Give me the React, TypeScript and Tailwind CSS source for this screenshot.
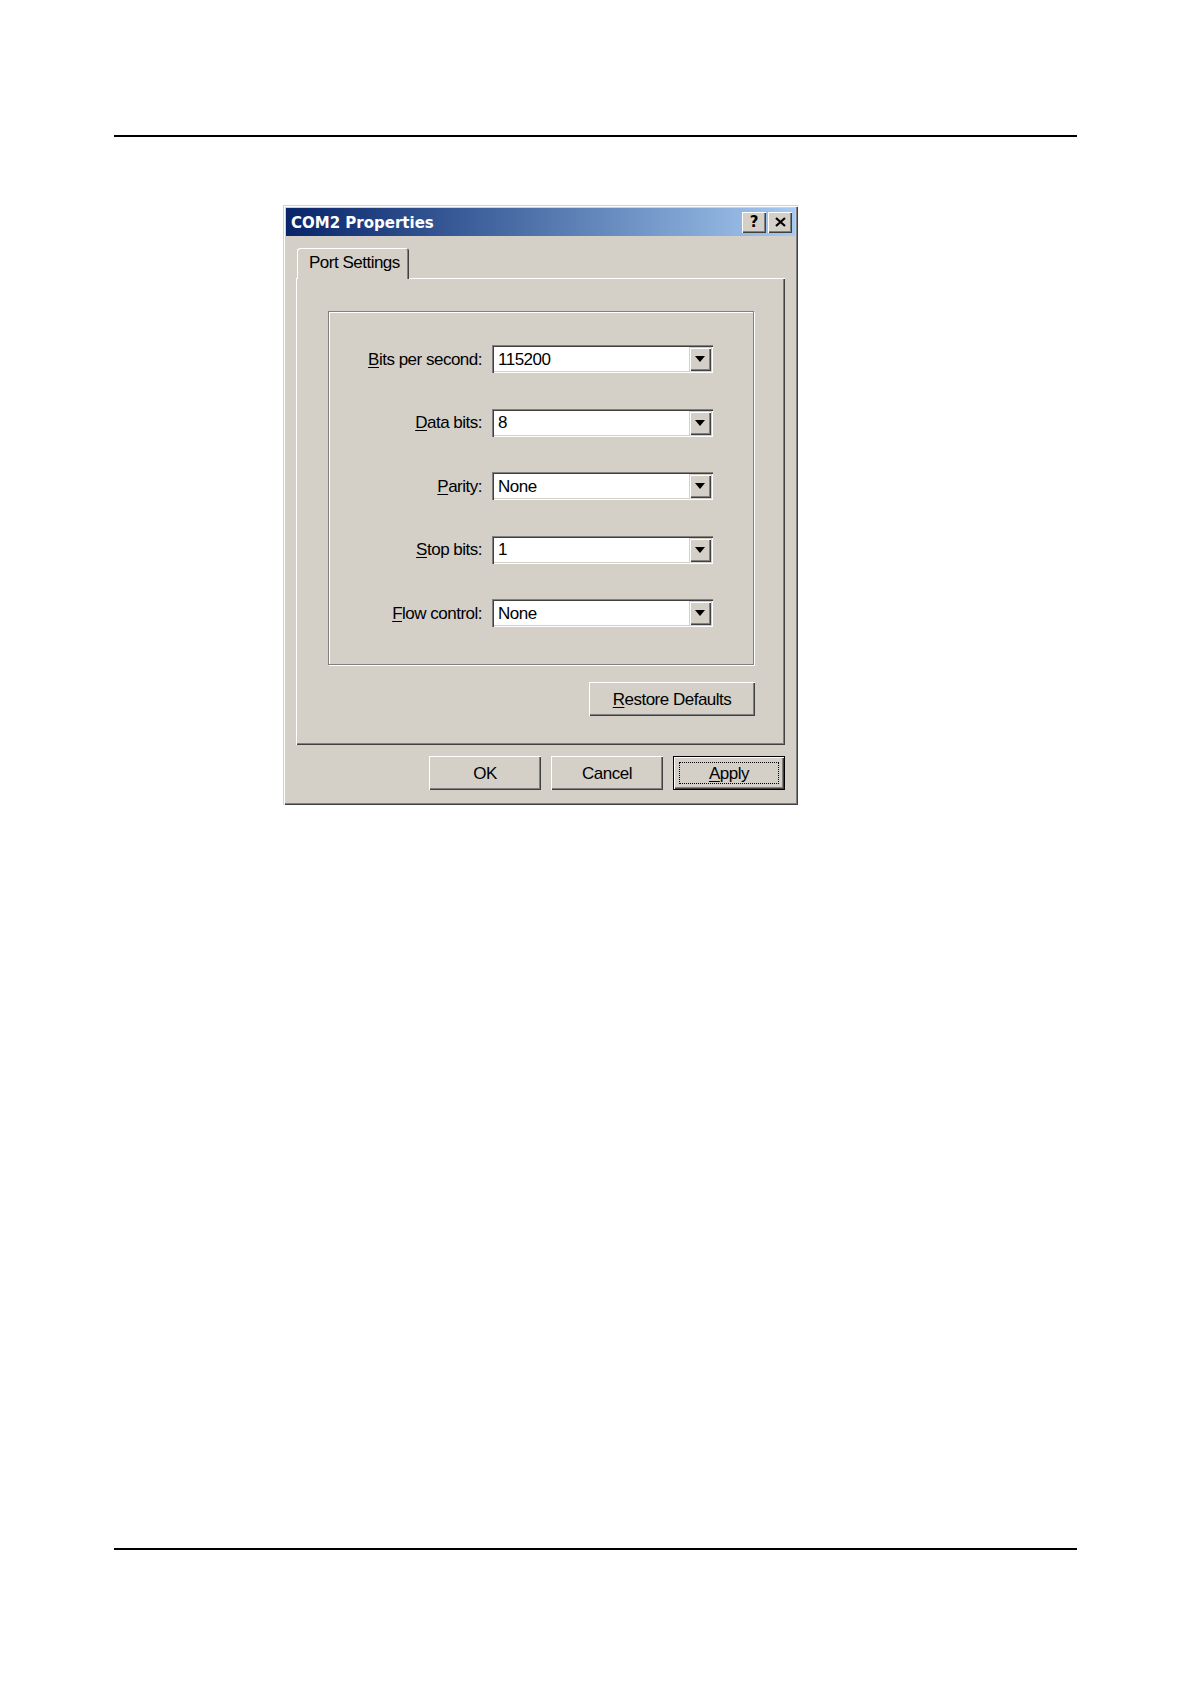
import React from "react";

function U({ children }: { children: React.ReactNode }) {
  return <span className="underline decoration-1 underline-offset-[2px]">{children}</span>;
}

function Combo({ value }: { value: string }) {
  return (
    <div className="w-[221px] h-[28px] bg-white flex items-stretch p-[2px] shadow-[inset_1px_1px_#808080,inset_2px_2px_#404040,inset_-1px_-1px_#ffffff,inset_-2px_-2px_#d4d0c8]">
      <div className="flex-1 flex items-center pl-[4px] text-black leading-none">{value}</div>
      <div className="w-[22px] bg-[#d4d0c8] flex items-center justify-center shadow-[inset_1px_1px_#d4d0c8,inset_2px_2px_#ffffff,inset_-1px_-1px_#404040,inset_-2px_-2px_#808080]">
        <svg width="10" height="6" viewBox="0 0 10 6">
          <path d="M0 0H10L5 6Z" fill="#000" />
        </svg>
      </div>
    </div>
  );
}

function Row({ label, value }: { label: React.ReactNode; value: string }) {
  return (
    <div className="flex items-center">
      <div className="w-[153px] text-right text-black leading-none">{label}</div>
      <div className="ml-[10px]">
        <Combo value={value} />
      </div>
    </div>
  );
}

function Btn({ children, w = "w-[112px]" }: { children: React.ReactNode; w?: string }) {
  return (
    <div
      className={`${w} h-[34px] bg-[#d4d0c8] flex items-center justify-center text-black leading-none shadow-[inset_1px_1px_#ffffff,inset_-1px_-1px_#404040,inset_-2px_-2px_#808080]`}
    >
      {children}
    </div>
  );
}

export default function App() {
  return (
    <div className="w-[1191px] h-[1684px] bg-white flex flex-col font-['Liberation_Sans',Arial,sans-serif] text-[17px] tracking-[-0.5px]">
      <div className="mt-[135px] ml-[114px] w-[963px] h-[2px] bg-black" />

      {/* Dialog */}
      <div className="ml-[283px] mt-[68px] w-[515px] h-[600px] bg-[#d4d0c8] p-[3px] shadow-[inset_1px_1px_#d4d0c8,inset_2px_2px_#ffffff,inset_-1px_-1px_#404040,inset_-2px_-2px_#808080] flex flex-col">
        {/* Title bar */}
        <div className="h-[28px] bg-linear-to-r from-[#0a246a] to-[#a6caf0] flex items-center pl-[5px] pr-[3px]">
          <div className="flex-1 text-white font-bold text-[15px] tracking-normal font-['DejaVu_Sans',Verdana,sans-serif] leading-none pt-[2px]">
            COM2 Properties
          </div>
          <div className="flex gap-[2px]">
            <div className="w-[24px] h-[21px] bg-[#d4d0c8] flex items-center justify-center shadow-[inset_1px_1px_#ffffff,inset_-1px_-1px_#404040,inset_-2px_-2px_#808080]">
              <span className="font-bold text-[15px] leading-none tracking-normal font-['DejaVu_Sans',Verdana,sans-serif] text-black">?</span>
            </div>
            <div className="w-[24px] h-[21px] bg-[#d4d0c8] flex items-center justify-center shadow-[inset_1px_1px_#ffffff,inset_-1px_-1px_#404040,inset_-2px_-2px_#808080]">
              <svg width="11" height="10" viewBox="0 0 11 10">
                <path d="M1 1L10 9M10 1L1 9" stroke="#000" strokeWidth="2.2" />
              </svg>
            </div>
          </div>
        </div>

        {/* Body */}
        <div className="px-[10px] pt-[12px] flex flex-col">
          {/* Tab */}
          <div className="ml-[1px] w-[112px] h-[31px] -mb-[1px] relative z-10 bg-[#d4d0c8] rounded-t-[3px] shadow-[inset_1px_1px_#ffffff,inset_-1px_0_#404040,inset_-2px_0_#808080] pl-[12px] pt-[6px] leading-none text-black">
            Port Settings
          </div>

          {/* Panel */}
          <div className="w-[489px] h-[467px] pt-[33px] pl-[32px] flex flex-col shadow-[inset_1px_1px_#ffffff,inset_-1px_-1px_#404040,inset_-2px_-2px_#808080]">
            {/* Group box */}
            <div className="w-[426px] h-[354px] border border-[#808080] shadow-[inset_1px_1px_#ffffff,1px_1px_#ffffff] pt-[33px] flex flex-col gap-[35.5px]">
              <Row label={<><U>B</U>its per second:</>} value="115200" />
              <Row label={<><U>D</U>ata bits:</>} value="8" />
              <Row label={<><U>P</U>arity:</>} value="None" />
              <Row label={<><U>S</U>top bits:</>} value="1" />
              <Row label={<><U>F</U>low control:</>} value="None" />
            </div>
            <div className="w-[427px] mt-[17px] flex justify-end">
              <Btn w="w-[166px]">
                <span><U>R</U>estore Defaults</span>
              </Btn>
            </div>
          </div>

          {/* Bottom buttons */}
          <div className="w-[489px] mt-[11px] flex justify-end gap-[10px]">
            <Btn>OK</Btn>
            <Btn>Cancel</Btn>
            <div className="w-[112px] h-[34px] border border-black relative">
              <div className="w-full h-full bg-[#d4d0c8] flex items-center justify-center text-black leading-none shadow-[inset_1px_1px_#ffffff,inset_-1px_-1px_#404040,inset_-2px_-2px_#808080]">
                <span><U>A</U>pply</span>
              </div>
              <div className="absolute inset-[5px] border border-dotted border-black" />
            </div>
          </div>
        </div>
      </div>

      <div className="mt-auto mb-[134px] ml-[114px] w-[963px] h-[2px] bg-black" />
    </div>
  );
}
